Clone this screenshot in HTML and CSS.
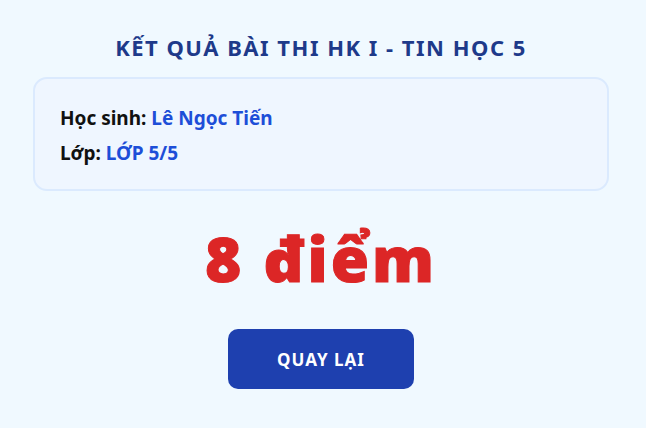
FILE: index.html
```html
<!DOCTYPE html>
<html lang="vi">

<head>
    <meta charset="UTF-8">
    <meta name="viewport" content="width=device-width, initial-scale=1.0">
    <title>Kết quả bài thi</title>
    <link rel="stylesheet" href="styles.css">
</head>

<body>
    <div class="page">
        <h1 class="title">KẾT QUẢ BÀI THI HK I - TIN HỌC 5</h1>
        <div class="info">
            <p class="row">Học sinh: <span class="val">Lê Ngọc Tiến</span></p>
            <p class="row">Lớp: <span class="val">LỚP 5/5</span></p>
        </div>
        <div class="score">8 điểm</div>
        <a href="#" class="btn">QUAY LẠI</a>
    </div>
</body>

</html>
```

FILE: styles.css
```css
* {
    margin: 0;
    padding: 0;
    box-sizing: border-box;
}

html,
body {
    height: 100%;
    width: 100%;
}

body {
    background: #f0f9ff;
    font-family: "Noto Sans", "Open Sans", sans-serif;
    font-weight: 700;
}

.page {
    margin: 0 37px 0 33px;
    padding-top: 31px;
    display: flex;
    flex-direction: column;
    align-items: center;
}

.title {
    font-size: 22px;
    line-height: 32px;
    letter-spacing: 1.5px;
    color: #1e3a8a;
    margin-bottom: 14px;
}

.info {
    align-self: stretch;
    background: #eff6ff;
    border: 2px solid #dbeafe;
    border-radius: 14px;
    padding: 26px 25px 22px;
    display: flex;
    flex-direction: column;
    gap: 8px;
}

.row {
    font-size: 19px;
    line-height: 27px;
    color: #111;
}

.val {
    color: #1d4ed8;
}

.score {
    margin-top: 27px;
    font-family: "Open Sans", "Noto Sans", sans-serif;
    font-size: 62px;
    line-height: 80px;
    font-weight: 800;
    letter-spacing: 3px;
    -webkit-text-stroke: 1px #dc2626;
    color: #dc2626;
}

.btn {
    margin-top: 31px;
    width: 186px;
    height: 60px;
    border-radius: 10px;
    background: #1e40af;
    color: #fff;
    font-size: 17px;
    letter-spacing: 1px;
    text-decoration: none;
    display: flex;
    align-items: center;
    justify-content: center;
}
```
